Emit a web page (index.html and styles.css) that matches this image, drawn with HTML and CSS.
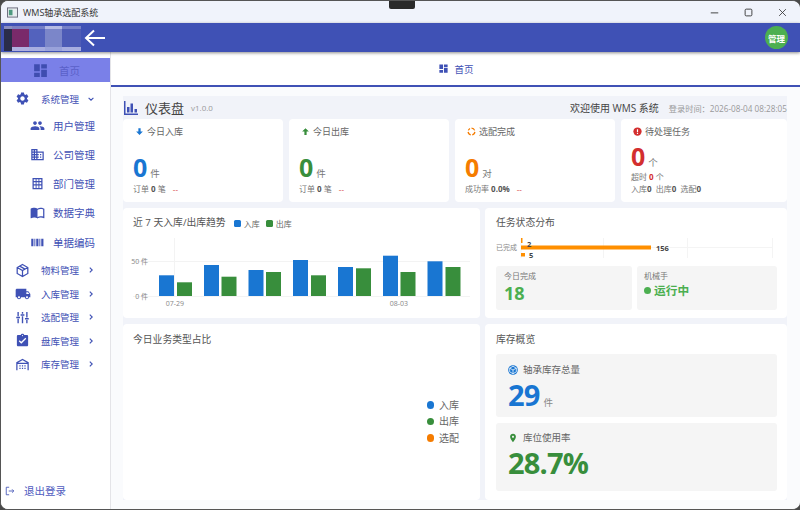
FILE: index.html
```html
<!DOCTYPE html>
<html lang="zh-CN">

<head>
  <meta charset="UTF-8">
  <meta name="viewport" content="width=device-width, initial-scale=1.0">
  <title>WMS轴承选配系统</title>
  <link rel="stylesheet" href="styles.css">
</head>

<body>
  <div class="window">
    <div class="notch"></div>

    <!-- 标题栏 -->
    <div class="titlebar">
      <svg class="app-icon" viewBox="0 0 12 12"><rect x="0.5" y="1" width="11" height="10" fill="#e8eef0" stroke="#667"/><rect x="2" y="3" width="4" height="6" fill="#4f9a80"/></svg>
      <span class="app-name">WMS轴承选配系统</span>
      <div class="win-buttons">
        <svg viewBox="0 0 12 12"><path d="M1 6.5h10" stroke="#333" stroke-width="1.2"/></svg>
        <svg viewBox="0 0 12 12"><rect x="1.5" y="1.5" width="9" height="9" rx="1.5" fill="none" stroke="#333" stroke-width="1.2"/></svg>
        <svg viewBox="0 0 12 12"><path d="M1.5 1.5l9 9M10.5 1.5l-9 9" stroke="#333" stroke-width="1.1"/></svg>
      </div>
    </div>

    <!-- 顶部栏 -->
    <header class="topbar">
      <div class="logo-mosaic">
        <span class="m1"></span><span class="m2"></span><span class="m3"></span><span class="m4"></span><span class="m5"></span>
      </div>
      <svg class="back-arrow" viewBox="0 0 22 18"><path d="M21 9H2M10 1.5L2 9l8 7.5" fill="none" stroke="#fff" stroke-width="2"/></svg>
      <div class="avatar">管理</div>
    </header>

    <div class="body-row">
      <!-- 侧边栏 -->
      <aside class="sidebar">
        <div class="nav-home">
          <svg class="icon-home" viewBox="0 0 24 24"><path d="M3 13h8V3H3v10zm0 8h8v-6H3v6zm10 0h8V11h-8v10zm0-18v6h8V3h-8z"/></svg>
          <span>首页</span>
        </div>
        <div class="nav-item">
          <svg class="nav-icon" viewBox="0 0 24 24"><path d="M19.14 12.94c.04-.3.06-.61.06-.94 0-.32-.02-.64-.07-.94l2.03-1.58c.18-.14.23-.41.12-.61l-1.92-3.32c-.12-.22-.37-.29-.59-.22l-2.39.96c-.5-.38-1.03-.7-1.62-.94l-.36-2.54c-.04-.24-.24-.41-.48-.41h-3.84c-.24 0-.43.17-.47.41l-.36 2.54c-.59.24-1.13.57-1.62.94l-2.39-.96c-.22-.08-.47 0-.59.22L2.74 8.87c-.12.21-.08.47.12.61l2.03 1.58c-.05.3-.09.63-.09.94s.02.64.07.94l-2.03 1.58c-.18.14-.23.41-.12.61l1.92 3.32c.12.22.37.29.59.22l2.39-.96c.5.38 1.03.7 1.62.94l.36 2.54c.05.24.24.41.48.41h3.84c.24 0 .44-.17.47-.41l.36-2.54c.59-.24 1.13-.56 1.62-.94l2.39.96c.22.08.47 0 .59-.22l1.92-3.32c.12-.22.07-.47-.12-.61l-2.01-1.58zM12 15.6c-1.98 0-3.6-1.62-3.6-3.6s1.62-3.6 3.6-3.6 3.6 1.62 3.6 3.6-1.62 3.6-3.6 3.6z"/></svg>
          <span class="nav-label">系统管理</span>
          <svg class="chevron" viewBox="0 0 10 10"><path d="M2 3.5l3 3 3-3"/></svg>
        </div>
        <div class="nav-sub">
          <svg class="sub-icon" viewBox="0 0 24 24"><path d="M16 11c1.66 0 2.99-1.34 2.99-3S17.66 5 16 5c-1.66 0-3 1.34-3 3s1.34 3 3 3zm-8 0c1.66 0 2.99-1.34 2.99-3S9.66 5 8 5C6.34 5 5 6.34 5 8s1.34 3 3 3zm0 2c-2.33 0-7 1.17-7 3.5V19h14v-2.5c0-2.33-4.67-3.5-7-3.5zm8 0c-.29 0-.62.02-.97.05 1.16.84 1.97 1.97 1.97 3.45V19h6v-2.5c0-2.33-4.67-3.5-7-3.5z"/></svg>
          <span>用户管理</span>
        </div>
        <div class="nav-sub">
          <svg class="sub-icon" viewBox="0 0 24 24"><path d="M12 7V3H2v18h20V7H12zM6 19H4v-2h2v2zm0-4H4v-2h2v2zm0-4H4V9h2v2zm0-4H4V5h2v2zm4 12H8v-2h2v2zm0-4H8v-2h2v2zm0-4H8V9h2v2zm0-4H8V5h2v2zm10 12h-8v-2h2v-2h-2v-2h2v-2h-2V9h8v10zm-2-8h-2v2h2v-2zm0 4h-2v2h2v-2z"/></svg>
          <span>公司管理</span>
        </div>
        <div class="nav-sub">
          <svg class="sub-icon" viewBox="0 0 24 24"><path fill-rule="evenodd" d="M4 3h16v18H4zM6 5v3h3V5zm4.500 0v3h3V5zM15 5v3h3V5zM6 10v3h3v-3zm4.500 0v3h3v-3zM15 10v3h3v-3zM6 15v4h3v-4zm4.500 0v4h3v-4zM15 15v4h3v-4z"/></svg>
          <span>部门管理</span>
        </div>
        <div class="nav-sub">
          <svg class="sub-icon" viewBox="0 0 24 24"><path d="M21 5c-1.11-.35-2.33-.5-3.5-.5-1.95 0-4.05.4-5.5 1.500-1.45-1.100-3.55-1.500-5.500-1.500S2.450 4.900 1 6v14.650c0 .25.25.5.5.5.1 0 .15-.05.25-.05C3.100 20.450 5.050 20 6.500 20c1.950 0 4.050.4 5.500 1.500 1.350-.85 3.800-1.500 5.500-1.500 1.650 0 3.350.3 4.750 1.050.1.05.15.05.25.05.25 0 .5-.25.5-.5V6c-.6-.45-1.250-.75-2-1zm0 13.500c-1.100-.35-2.300-.5-3.500-.5-1.700 0-4.150.65-5.500 1.500V8c1.350-.85 3.800-1.500 5.500-1.500 1.200 0 2.400.15 3.500.5v11.500z"/></svg>
          <span>数据字典</span>
        </div>
        <div class="nav-sub">
          <svg class="sub-icon" viewBox="0 0 24 24"><path d="M2 6h3.500v12H2zM7 6h1.500v12H7zM10 6h3.500v12H10zM15 6h1.500v12H15zM18 6h3.500v12H18z"/></svg>
          <span>单据编码</span>
        </div>
        <div class="nav-item">
          <svg class="nav-icon" viewBox="0 0 24 24"><path class="line" d="M12 2.500l8.500 4.800v9.400L12 21.500l-8.500-4.800V7.300zM3.500 7.300L12 12l8.500-4.700M12 12v9.500M7.500 5l8.500 4.800" stroke-width="2"/></svg>
          <span class="nav-label">物料管理</span>
          <svg class="chevron" viewBox="0 0 10 10"><path d="M3.500 2l3 3-3 3"/></svg>
        </div>
        <div class="nav-item">
          <svg class="nav-icon truck" viewBox="0 0 24 24"><path d="M20 8h-3V4H3c-1.100 0-2 .9-2 2v11h2c0 1.660 1.340 3 3 3s3-1.340 3-3h6c0 1.660 1.340 3 3 3s3-1.340 3-3h2v-5l-3-4zM6 18.500c-.83 0-1.500-.67-1.500-1.500s.67-1.500 1.500-1.500 1.500.67 1.500 1.500-.67 1.500-1.500 1.500zm13.500-9l1.960 2.500H17V9.500h2.500zm-1.500 9c-.83 0-1.500-.67-1.500-1.500s.67-1.500 1.500-1.500 1.500.67 1.500 1.500-.67 1.500-1.500 1.500z"/></svg>
          <span class="nav-label">入库管理</span>
          <svg class="chevron" viewBox="0 0 10 10"><path d="M3.500 2l3 3-3 3"/></svg>
        </div>
        <div class="nav-item">
          <svg class="nav-icon" viewBox="0 0 24 24"><path class="line" d="M5 3v7M5 14v7M12 3v3M12 10v11M19 3v9M19 16v5M2 12h6M9 8h6M16 14h6" stroke-width="2.200"/></svg>
          <span class="nav-label">选配管理</span>
          <svg class="chevron" viewBox="0 0 10 10"><path d="M3.500 2l3 3-3 3"/></svg>
        </div>
        <div class="nav-item">
          <svg class="nav-icon" viewBox="0 0 24 24"><path d="M19 3h-4.180C14.400 1.840 13.300 1 12 1c-1.300 0-2.400.84-2.820 2H5c-1.100 0-2 .9-2 2v14c0 1.100.9 2 2 2h14c1.100 0 2-.9 2-2V5c0-1.100-.9-2-2-2zm-7 0c.55 0 1 .45 1 1s-.45 1-1 1-1-.45-1-1 .45-1 1-1zm-2 14l-4-4 1.410-1.410L10 14.170l6.590-6.590L18 9l-8 8z"/></svg>
          <span class="nav-label">盘库管理</span>
          <svg class="chevron" viewBox="0 0 10 10"><path d="M3.500 2l3 3-3 3"/></svg>
        </div>
        <div class="nav-item">
          <svg class="nav-icon" viewBox="0 0 24 24"><path class="line" d="M3 21V9l9-5 9 5v12M3 10h18" stroke-width="2"/><path d="M7 13h2v2H7zM11 13h2v2h-2zM15 13h2v2h-2zM7 17h2v2H7zM11 17h2v2h-2zM15 17h2v2h-2z"/></svg>
          <span class="nav-label">库存管理</span>
          <svg class="chevron" viewBox="0 0 10 10"><path d="M3.500 2l3 3-3 3"/></svg>
        </div>
        <div class="logout">
          <svg viewBox="0 0 12 12"><path class="line" d="M5 1.500H1.500v9H5M4.500 6h6M8.500 4l2 2-2 2" stroke-width="1"/></svg>
          <span>退出登录</span>
        </div>
      </aside>

      <main class="main">
        <div class="tabbar">
          <svg viewBox="0 0 24 24"><path d="M3 13h8V3H3v10zm0 8h8v-6H3v6zm10 0h8V11h-8v10zm0-18v6h8V3h-8z"/></svg>
          <span>首页</span>
        </div>

        <div class="content">
          <!-- 仪表盘标题 -->
          <div class="dash-head">
            <svg class="dash-icon" viewBox="0 0 14 14"><path d="M0 0h1.500v12.500H14V14H0zM3 6h2.500v5.500H3zM6.500 2.500H9v9H6.500zM10.500 8H13v3.500h-2.500z"/></svg>
            <span class="dash-title">仪表盘</span>
            <span class="version">v1.0.0</span>
            <span class="welcome">欢迎使用 WMS 系统</span>
            <span class="login-time">登录时间：2026-08-04 08:28:05</span>
          </div>

          <!-- 统计卡片 -->
          <div class="stat-row">
            <div class="card stat">
              <div class="stat-label">
                <svg viewBox="0 0 12 12" class="c-blue"><path d="M4.500 1.500h3v4.500H10.500L6 10.500 1.500 6h3z"/></svg>
                今日入库
              </div>
              <div class="stat-value"><b class="t-blue">0</b><span>件</span></div>
              <div class="stat-sub">订单 <b>0</b> 笔 <i class="trend t-red">--</i></div>
            </div>
            <div class="card stat">
              <div class="stat-label">
                <svg viewBox="0 0 12 12" class="c-green"><path d="M4.500 10.500h3V6H10.500L6 1.500 1.500 6h3z"/></svg>
                今日出库
              </div>
              <div class="stat-value"><b class="t-green">0</b><span>件</span></div>
              <div class="stat-sub">订单 <b>0</b> 笔 <i class="trend t-red">--</i></div>
            </div>
            <div class="card stat">
              <div class="stat-label">
                <svg viewBox="0 0 12 12"><path d="M6 1.500a4.500 4.500 0 0 1 4.200 3M10.500 6.500a4.500 4.500 0 0 1-3.500 4M5 10.500a4.500 4.500 0 0 1-3.500-4M1.800 4.500A4.500 4.500 0 0 1 4 2" fill="none" stroke="#f57c00" stroke-width="1.700"/></svg>
                选配完成
              </div>
              <div class="stat-value"><b class="t-orange">0</b><span>对</span></div>
              <div class="stat-sub">成功率 <b>0.0%</b> <i class="trend t-red">--</i></div>
            </div>
            <div class="card stat stat-alert">
              <div class="stat-label">
                <svg viewBox="0 0 12 12"><circle cx="6" cy="6" r="5.500" fill="#d32f2f"/><path d="M6 3v3.500M6 7.800v1.400" stroke="#fff" stroke-width="1.600"/></svg>
                待处理任务
              </div>
              <div class="stat-value"><b class="t-red">0</b><span>个</span></div>
              <div class="stat-sub">超时 <b class="t-red">0</b> 个</div>
              <div class="stat-sub">入库<b>0</b>&nbsp; 出库<b>0</b>&nbsp; 选配<b>0</b></div>
            </div>
          </div>

          <!-- 趋势图 + 任务分布 -->
          <div class="mid-row">
            <div class="card trend-card">
              <div class="trend-head">
                <span class="card-title">近 7 天入库/出库趋势</span>
                <span class="key"><i class="bg-blue"></i>入库</span>
                <span class="key"><i class="bg-green"></i>出库</span>
              </div>
              <svg class="trend-chart" viewBox="123 234 357 84" width="357" height="84">
                <path d="M133 261.500H470M133 296.500H470M174.500 238v58" stroke="#f3f3f3" stroke-width="1"/>
                <text x="148" y="264" class="axis" text-anchor="end">50 件</text>
                <text x="148" y="299" class="axis" text-anchor="end">0 件</text>
                <g fill="#1976d2">
                  <rect x="159" y="275.300" width="15" height="20.700"/>
                  <rect x="204" y="265" width="15" height="31"/>
                  <rect x="248.500" y="270" width="15" height="26"/>
                  <rect x="293" y="260" width="15" height="36"/>
                  <rect x="338" y="267" width="15" height="29"/>
                  <rect x="383" y="255.700" width="15" height="40.300"/>
                  <rect x="427.500" y="261.300" width="15" height="34.700"/>
                </g>
                <g fill="#388e3c">
                  <rect x="177" y="282.300" width="15" height="13.700"/>
                  <rect x="221.500" y="276.700" width="15" height="19.300"/>
                  <rect x="266" y="272" width="15" height="24"/>
                  <rect x="311" y="275.300" width="15" height="20.700"/>
                  <rect x="356" y="268.300" width="15" height="27.700"/>
                  <rect x="400.500" y="272" width="15" height="24"/>
                  <rect x="445.500" y="267" width="15" height="29"/>
                </g>
                <text x="175" y="306" class="axis" text-anchor="middle">07-29</text>
                <text x="399" y="306" class="axis" text-anchor="middle">08-03</text>
              </svg>
            </div>

            <div class="card task-card">
              <div class="card-title">任务状态分布</div>
              <svg class="task-chart" viewBox="496 238 281 20" width="281" height="20">
                <path d="M521 238v20M603.500 238v20M687.500 238v20M772.500 238v20M521 247.500h251" stroke="#f4f4f4"/>
                <text x="517" y="250" class="axis" text-anchor="end">已完成</text>
                <g fill="#ff8f00">
                  <rect x="521" y="238" width="1.500" height="5"/>
                  <rect x="521" y="245.500" width="130" height="4"/>
                  <rect x="521" y="253" width="4" height="3.500"/>
                </g>
                <text x="527" y="246.500" class="bar-val">2</text>
                <text x="656" y="251" class="bar-val">156</text>
                <text x="529" y="257.800" class="bar-val">5</text>
              </svg>
              <div class="task-tiles">
                <div class="tile">
                  <div class="tile-label">今日完成</div>
                  <div class="tile-big">18</div>
                </div>
                <div class="tile">
                  <div class="tile-label">机械手</div>
                  <div class="tile-status"><i></i>运行中</div>
                </div>
              </div>
            </div>
          </div>

          <!-- 占比 + 库存 -->
          <div class="bottom-row">
            <div class="card pie-card">
              <div class="card-title">今日业务类型占比</div>
              <ul class="pie-legend">
                <li><i class="bg-blue"></i>入库</li>
                <li><i class="bg-green"></i>出库</li>
                <li><i class="bg-orange"></i>选配</li>
              </ul>
            </div>

            <div class="card stock-card">
              <div class="card-title">库存概览</div>
              <div class="stock-tile">
                <div class="stock-label">
                  <svg viewBox="0 0 12 12"><circle cx="6" cy="6" r="5.800" fill="#1976d2"/><path d="M6 1.500l4 2.300v4.400L6 10.500 2 8.200V3.800zM2 3.800L6 6l4-2.200M6 6v4.500" fill="none" stroke="#fff" stroke-width=".9"/></svg>
                  轴承库存总量
                </div>
                <div class="stock-value t-blue">29<span>件</span></div>
              </div>
              <div class="stock-tile">
                <div class="stock-label">
                  <svg viewBox="0 0 24 24" class="c-green"><path d="M12 2C8.130 2 5 5.130 5 9c0 5.250 7 13 7 13s7-7.750 7-13c0-3.870-3.130-7-7-7zm0 9.500c-1.380 0-2.500-1.120-2.500-2.500s1.120-2.500 2.500-2.500 2.500 1.120 2.500 2.500-1.120 2.500-2.500 2.500z"/></svg>
                  库位使用率
                </div>
                <div class="stock-value t-green">28.7%</div>
              </div>
            </div>
          </div>
        </div>
      </main>
    </div>
  </div>
</body>

</html>
```

FILE: styles.css
```css
/* 页面与窗口 */
* {
  box-sizing: border-box;
}

body {
  margin: 0;
  background: #4a4a4a;
  font-family: "Open Sans", "Noto Sans CJK SC", sans-serif;
  color: #555;
}

.window {
  position: relative;
  display: flex;
  flex-direction: column;
  width: 800px;
  height: 510px;
  border: 1px solid #555;
  border-right: 0;
  border-radius: 8px 8px 8px 8px;
  overflow: hidden;
  background: #fff;
}

.notch {
  position: absolute;
  top: -1px;
  left: 388px;
  width: 26px;
  height: 9px;
  background: #2a2a2a;
  border-radius: 0 0 2px 2px;
}

/* 标题栏 */
.titlebar {
  display: flex;
  align-items: center;
  flex: none;
  height: 22px;
  padding-left: 6px;
  background: #f0f3fb;
}

.app-icon {
  width: 11px;
  height: 11px;
  margin-right: 5px;
}

.app-name {
  font-size: 9px;
  color: #333;
}

.win-buttons {
  display: flex;
  gap: 25px;
  margin-left: auto;
  margin-right: 13px;
}

.win-buttons svg {
  width: 9px;
  height: 9px;
}

/* 顶部栏 */
.topbar {
  position: relative;
  z-index: 1;
  display: flex;
  align-items: center;
  flex: none;
  height: 29px;
  padding: 0 12px 0 3px;
  background: #3f51b5;
  box-shadow: 0 1px 3px rgba(0, 0, 0, .45);
}

.logo-mosaic {
  display: flex;
  height: 25px;
  margin-top: 1px;
}

.logo-mosaic span {
  display: block;
  height: 100%;
}

.m1 {
  width: 8px;
  background: linear-gradient(#8a8ec0 0 3px, #2a2d4a 3px);
}

.m2 {
  width: 17px;
  background: linear-gradient(#7c7fc0 0 3px, #7a2a6a 3px 21px, #b0b0e0 21px);
}

.m3 {
  width: 16px;
  background: linear-gradient(#7580c8 0 3px, #5362bd 3px 21px, #a8aee0 21px);
}

.m4 {
  width: 17px;
  background: linear-gradient(#b5bbe4 0 3px, #7b86c9 3px 21px, #99a2da 21px);
}

.m5 {
  width: 19px;
  background: linear-gradient(#7580c8 0 3px, #4d5bb6 3px 21px, #a8aee0 21px);
}

.back-arrow {
  width: 22px;
  height: 18px;
  margin-left: 3px;
}

.avatar {
  display: flex;
  align-items: center;
  justify-content: center;
  width: 23px;
  height: 23px;
  margin-left: auto;
  border-radius: 50%;
  background: #4caf50;
  color: #fff;
  font-size: 8.5px;
  font-weight: 700;
}

.body-row {
  display: flex;
  flex: 1;
  min-height: 0;
}

/* 侧边栏 */
.sidebar {
  display: flex;
  flex-direction: column;
  flex: none;
  width: 110px;
  padding-top: 6px;
  border-right: 1px solid #e4e4e8;
  background: #fff;
  color: #3f51b5;
  font-size: 10.5px;
}

.sidebar svg {
  fill: #3f51b5;
}

.nav-home {
  display: flex;
  align-items: center;
  flex: none;
  height: 24px;
  margin-bottom: 5px;
  padding-left: 31px;
  background: #7a80e8;
  color: #5a60c8;
}

.sidebar .icon-home {
  width: 17px;
  height: 17px;
  margin-right: 10px;
  fill: #3f4db0;
}

.nav-item {
  display: flex;
  align-items: center;
  flex: none;
  height: 23.5px;
  padding-left: 14px;
  font-size: 9.5px;
}

.nav-sub + .nav-item {
  margin-top: 1.5px;
}

.nav-icon {
  flex: none;
  width: 15px;
  height: 15px;
  margin-right: 11px;
}

.nav-icon.truck {
  width: 16px;
  height: 16px;
  margin-right: 10px;
}

.nav-label {
  width: 46px;
}

.chevron {
  width: 8px;
  height: 8px;
}

.sidebar .chevron {
  fill: none;
}

.chevron path {
  fill: none;
  stroke: #3f51b5;
  stroke-width: 1.4;
}

.sidebar .line {
  fill: none;
  stroke: #3f51b5;
}

.nav-sub {
  display: flex;
  align-items: center;
  flex: none;
  height: 29.25px;
  padding-left: 29px;
}

.sub-icon {
  flex: none;
  width: 15px;
  height: 15px;
  margin-right: 8px;
}

.logout {
  display: flex;
  align-items: center;
  margin-top: auto;
  margin-bottom: 11px;
  padding-left: 4px;
  color: #4f5cc0;
}

.logout svg {
  width: 10px;
  height: 10px;
  margin-right: 9px;
}

/* 主区域 */
.main {
  display: flex;
  flex-direction: column;
  flex: 1;
  min-width: 0;
  background: #fafbfd;
}

.tabbar {
  display: flex;
  align-items: center;
  justify-content: center;
  flex: none;
  gap: 5px;
  height: 35px;
  padding-left: 1px;
  border-bottom: 2px solid #3f51b5;
  background: #fff;
  color: #3f51b5;
  font-size: 9.5px;
}

.tabbar svg {
  width: 11px;
  height: 11px;
  fill: #3f51b5;
}

.content {
  display: flex;
  flex-direction: column;
  flex: 1;
  min-height: 0;
  margin: 9px 13px 9px 12px;
  background: #f1f3f9;
}

.dash-head {
  display: flex;
  align-items: center;
  flex: none;
  height: 23px;
}

.dash-icon {
  width: 14px;
  height: 14px;
  margin-right: 7px;
  margin-left: 1px;
  fill: #3f51b5;
}

.dash-title {
  font-size: 13px;
  color: #444;
}

.version {
  margin-left: 7px;
  font-size: 8px;
  color: #999;
}

.welcome {
  margin-left: auto;
  font-size: 10px;
  color: #444;
}

.login-time {
  margin-left: 10px;
  font-size: 8.2px;
  color: #999;
  white-space: nowrap;
}

/* 卡片 */
.card {
  border-radius: 4px;
  background: #fff;
}

.card-title {
  font-size: 9.8px;
  line-height: 14px;
  color: #555;
}

.stat-row {
  display: grid;
  grid-template-columns: 160px 160px 160px 1fr;
  gap: 6px;
  flex: none;
  height: 83px;
}

.stat {
  display: flex;
  flex-direction: column;
  padding: 6px 10px 7px;
}

.stat-label {
  display: flex;
  align-items: center;
  gap: 3px;
  margin-bottom: auto;
  padding-left: 2px;
  font-size: 9px;
  line-height: 13px;
  color: #666;
}

.stat-label svg {
  width: 9px;
  height: 9px;
}

.stat-value {
  display: flex;
  align-items: baseline;
  gap: 3px;
  height: 28px;
  margin-bottom: 2px;
  line-height: 28px;
}

.stat-value b {
  font-size: 25px;
  font-weight: 700;
}

.stat-value span {
  font-size: 9.5px;
  line-height: 1;
  color: #777;
}

.stat-sub {
  font-size: 8px;
  line-height: 12px;
  color: #777;
}

.stat-sub b {
  color: #555;
}

.stat-sub b.t-red {
  color: #d32f2f;
}

.trend {
  margin-left: 5px;
  font-style: normal;
}

.stat-alert .stat-label {
  margin-bottom: 0;
}

.stat-alert .stat-value {
  margin: 3.5px 0 1.5px;
}

.t-blue { color: #1976d2; }
.t-green { color: #388e3c; }
.t-orange { color: #f57c00; }
.t-red { color: #d32f2f; }
.c-blue { fill: #1976d2; }
.c-green { fill: #388e3c; }
.bg-blue { background: #1976d2; }
.bg-green { background: #388e3c; }
.bg-orange { background: #f57c00; }

/* 中间一行 */
.mid-row {
  display: grid;
  grid-template-columns: 357px 1fr;
  gap: 5px;
  flex: none;
  height: 110px;
  margin-top: 6px;
}

.trend-card {
  overflow: hidden;
  padding-top: 8px;
}

.trend-head {
  display: flex;
  align-items: center;
  height: 14px;
  padding-left: 10px;
}

.key {
  display: flex;
  align-items: center;
  gap: 3px;
  margin-left: 6px;
  font-size: 8px;
  color: #666;
}

.key:nth-child(2) {
  margin-left: 8px;
}

.key i {
  width: 7px;
  height: 7px;
  border-radius: 1.5px;
}

.trend-chart {
  display: block;
  margin-top: 4px;
}

.axis {
  font-size: 7px;
  fill: #888;
}

.bar-val {
  font-size: 7.5px;
  font-weight: 700;
  fill: #444;
}

.task-card {
  padding: 8px 10px 8px 11px;
}

.task-chart {
  display: block;
  margin-top: 8px;
  overflow: visible;
}

.task-tiles {
  display: grid;
  grid-template-columns: 136px 140px;
  gap: 5px;
  height: 44px;
  margin-top: 8px;
}

.tile {
  padding: 3px 8px;
  border-radius: 3px;
  background: #f5f5f5;
}

.tile + .tile {
  padding-left: 7px;
}

.tile-label {
  font-size: 8px;
  line-height: 13px;
  color: #777;
}

.tile-big {
  font-size: 18px;
  font-weight: 700;
  line-height: 22px;
  color: #4caf50;
}

.tile-status {
  display: flex;
  align-items: center;
  gap: 3px;
  font-size: 11.7px;
  font-weight: 700;
  line-height: 17px;
  color: #4caf50;
}

.tile-status i {
  width: 7px;
  height: 7px;
  border-radius: 50%;
  background: #4caf50;
}

/* 底部一行 */
.bottom-row {
  display: grid;
  grid-template-columns: 357px 1fr;
  gap: 5px;
  flex: 1;
  min-height: 0;
  margin-top: 6px;
}

.pie-card {
  display: flex;
  flex-direction: column;
  padding: 9px 10px 8px;
}

.pie-legend {
  align-self: flex-end;
  margin: 50px 11px 0 0;
  padding: 0;
  list-style: none;
  font-size: 10px;
  line-height: 16.4px;
  color: #666;
}

.pie-legend li {
  display: flex;
  align-items: center;
  gap: 5px;
}

.pie-legend i {
  width: 7.5px;
  height: 7.5px;
  border-radius: 50%;
}

.stock-card {
  padding: 9px 10px 9px 11px;
}

.stock-tile {
  height: 68px;
  margin-top: 6px;
  padding: 8px 12px;
  border-radius: 3px;
  background: #f5f5f5;
}

.card-title + .stock-tile {
  height: 63px;
  margin-top: 7px;
  padding-top: 9px;
}

.stock-label {
  display: flex;
  align-items: center;
  gap: 5px;
  font-size: 9.5px;
  line-height: 14px;
  color: #666;
}

.stock-label svg {
  width: 10px;
  height: 10px;
}

.stock-value {
  font-size: 29px;
  font-weight: 700;
  line-height: 36px;
  letter-spacing: -.8px;
}

.stock-value span {
  margin-left: 4px;
  font-size: 9.5px;
  font-weight: 400;
  letter-spacing: 0;
  color: #888;
}
```
